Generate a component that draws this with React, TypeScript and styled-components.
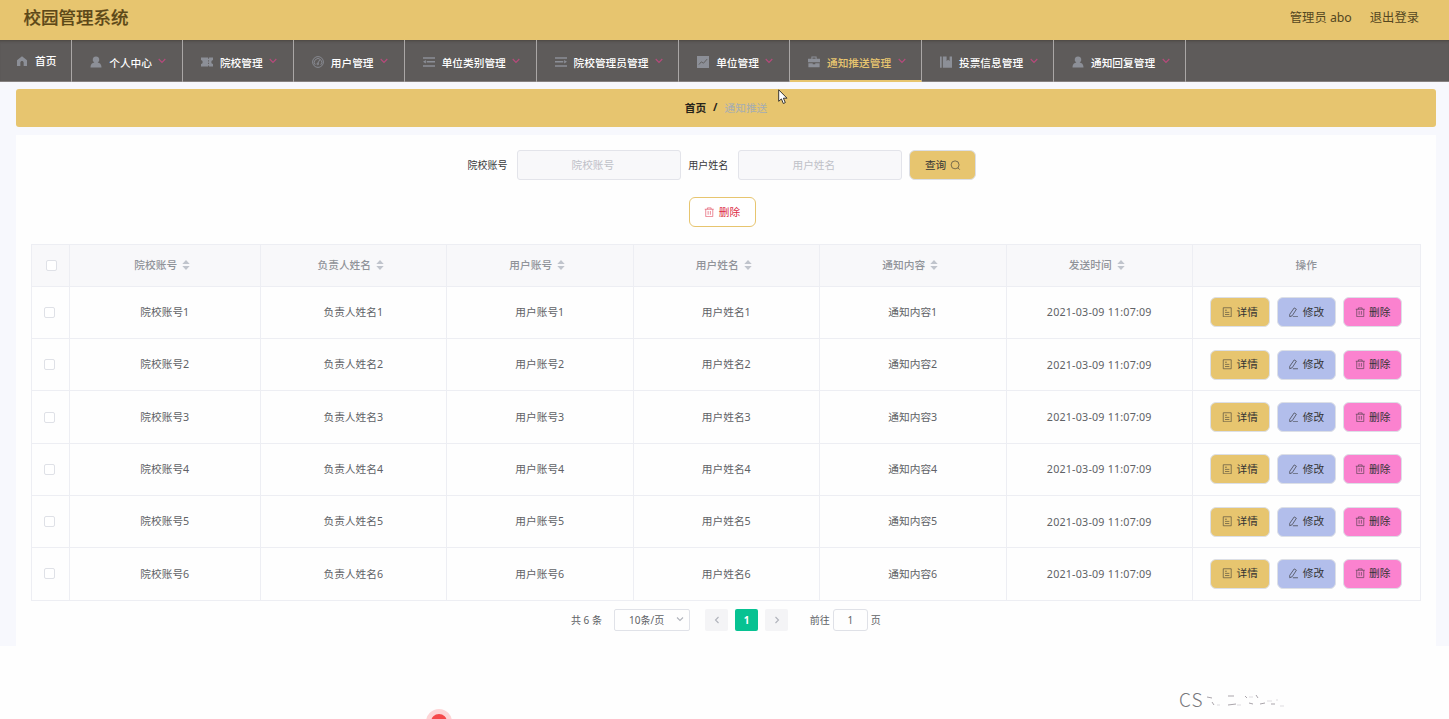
import React from 'react';
import styled, { createGlobalStyle } from 'styled-components';

const GlobalStyle = createGlobalStyle`
  * { box-sizing: border-box; }
  html, body { margin: 0; padding: 0; overflow: hidden; background: #fefefe; }
  body { font-family: "Noto Sans", "Noto Sans CJK SC", sans-serif; font-size: 10.7px; color: #606266; }
  button, input { font-family: inherit; }
`;

const Page = styled.div`
  position: relative;
  width: 1449px;
  height: 719px;
  overflow: hidden;
`;
const Header = styled.header`
  height: 40px;
  padding: 0 30px 4px 23.5px;
  display: flex;
  align-items: center;
  justify-content: space-between;
  background: #e7c56f;
`;
const Title = styled.h1`
  margin: 0;
  padding-bottom: 2px;
  font-size: 17.5px;
  line-height: 24px;
  font-weight: 500;
  color: #5c4818;
  -webkit-text-stroke: 0.2px #5c4818;
`;
const Account = styled.div`
  display: flex;
  gap: 18px;
  font-size: 12.3px;
  line-height: 20px;
  color: #54471f;
  white-space: pre;
`;
const Nav = styled.nav`
  height: 42px;
  display: flex;
  background: #5e5b5a;
  border-bottom: 1px solid #858180;
  box-shadow: inset 0 3px 3px -2px #4b4540;
`;
const NavItem = styled.a<{ $w: number; $active?: boolean; $home?: boolean }>`
  width: ${p => p.$w}px;
  height: 41.5px;
  flex: none;
  display: flex;
  align-items: center;
  padding-left: ${p => (p.$home ? 16 : 18)}px;
  padding-top: ${p => (p.$home ? 0 : p.$active ? 5 : 3)}px;
  border-right: 1px solid #aaa7a6;
  border-bottom: ${p => (p.$active ? '2px solid #e7c56f' : '0')};
  color: ${p => (p.$active ? '#e7c56f' : '#fff')};
  font-weight: 500;
  white-space: nowrap;
`;
const NavIcon = styled.svg`
  width: 12px;
  height: 12px;
  flex: none;
  margin-right: 7px;
  color: #8c8f97;
`;
const Caret = styled.svg`
  width: 8px;
  height: 6px;
  flex: none;
  margin-left: 6.5px;
  margin-bottom: 3px;
`;
const Body = styled.main`
  height: 564px;
  padding: 7px 13px 0 16px;
  background: #f7f8fd;
`;
const Breadcrumb = styled.div`
  height: 38px;
  padding-bottom: 2px;
  border-radius: 3px;
  background: #e7c56f;
  display: flex;
  justify-content: center;
  align-items: center;
  gap: 7px;
  color: #262319;
  font-weight: 700;
`;
const Crumb = styled.span`
  color: #a5adb3;
  font-weight: 400;
`;
const Panel = styled.section`
  height: 511px;
  margin-top: 8px;
  padding: 15px 15px 0;
  background: #fefefe;
`;
const Search = styled.div`
  display: flex;
  align-items: center;
  height: 30px;
  padding-left: 436.4px;
`;
const Label = styled.label`
  font-size: 10px;
  padding-bottom: 2px;
  color: #37383b;
  width: 49.2px;
`;
const Field = styled.input`
  width: 164.6px;
  height: 30px;
  margin-right: 7.2px;
  padding: 0 24px 0 12px;
  border: 1px solid #e3e4ea;
  border-radius: 3px;
  background: #f8f8fa;
  text-align: center;
  font-size: 10.7px;
  &::placeholder { color: #bfc1c8; }
`;
const Button = styled.button<{ $bg: string; $border?: string; $fg?: string; $w: number }>`
  width: ${p => p.$w}px;
  height: 30px;
  padding: 0 0 2px;
  flex: none;
  display: flex;
  align-items: center;
  justify-content: center;
  gap: 4px;
  border-radius: 6px;
  border: 1px solid ${p => p.$border || '#dcdfe6'};
  background: ${p => p.$bg};
  color: ${p => p.$fg || '#333'};
  font-size: 10.7px;
`;
const ButtonIcon = styled.svg`
  width: 10.5px;
  height: 10.5px;
  flex: none;
  margin-top: 1.5px;
  opacity: 0.8;
`;
const BulkActions = styled.div`
  display: flex;
  padding: 17px 0 17px 657.5px;
`;
const Table = styled.div`
  width: 1389.5px;
  border: 1px solid #edeef3;
  border-bottom: 0;
`;
const Row = styled.div<{ $head?: boolean }>`
  display: grid;
  grid-template-columns: 38px 190.5px 186.5px 186.5px 186.5px 186.5px 186.5px 1fr;
  height: ${p => (p.$head ? 41.8 : 52.3)}px;
  background: ${p => (p.$head ? '#f8f8fa' : '#fefefe')};
  color: ${p => (p.$head ? '#909399' : '#606266')};
  font-weight: ${p => (p.$head ? 500 : 400)};
`;
const Cell = styled.div<{ $kind?: 'text' | 'sortable' }>`
  display: flex;
  align-items: center;
  justify-content: center;
  gap: ${p => (p.$kind === 'sortable' ? 5 : 7)}px;
  padding: ${p => (p.$kind === 'sortable' ? '0 5px 2px 0' : p.$kind === 'text' ? '0 0 1.6px' : '0')};
  border-right: 1px solid #edeef3;
  border-bottom: 1px solid #edeef3;
  white-space: nowrap;
  &:last-child { border-right: 0; }
`;
const DateText = styled.span`
  letter-spacing: 0.2px;
`;
const Checkbox = styled.span<{ $head?: boolean }>`
  width: 11px;
  height: 11px;
  margin-left: ${p => (p.$head ? 1.5 : -2)}px;
  border: 1px solid #dfe1e7;
  border-radius: 2px;
  background: #fff;
`;
const Sort = styled.svg`
  width: 8px;
  height: 10px;
  margin-top: 1px;
`;
const Pager = styled.div`
  display: flex;
  align-items: center;
  height: 22px;
  margin-top: 8.4px;
  padding-left: 540px;
  font-size: 10px;
`;
const Total = styled.span`
  width: 43px;
  padding-bottom: 1px;
  white-space: nowrap;
`;
const PageSize = styled.div`
  width: 76px;
  height: 22px;
  margin-right: 15px;
  padding: 0 5px 1px 14px;
  display: flex;
  align-items: center;
  justify-content: space-between;
  border: 1px solid #e0e2e8;
  border-radius: 2px;
`;
const PageButton = styled.span<{ $active?: boolean }>`
  width: 23px;
  height: 22px;
  margin-right: 7.2px;
  display: flex;
  align-items: center;
  justify-content: center;
  border-radius: 2px;
  background: ${p => (p.$active ? '#07c292' : '#f4f4f6')};
  color: ${p => (p.$active ? '#fff' : '#b8bbc2')};
  font-weight: 700;
`;
const Jump = styled.div`
  display: flex;
  align-items: center;
  gap: 3px;
  margin-left: 14.3px;
  white-space: nowrap;
`;
const JumpBox = styled.span`
  width: 35px;
  height: 22px;
  display: flex;
  align-items: center;
  justify-content: center;
  border: 1px solid #dfe1e7;
  border-radius: 3px;
`;
const Cursor = styled.svg`
  position: absolute;
  left: 778px;
  top: 89px;
  width: 10px;
  height: 16px;
`;
const RecordDot = styled.div`
  position: absolute;
  left: 426px;
  top: 709px;
  width: 26px;
  height: 26px;
  border-radius: 50%;
  border: 5.5px solid #fdd5d6;
  background: #f5494a;
`;
const Watermark = styled.div`
  position: absolute;
  left: 1179px;
  top: 687px;
  height: 24px;
  display: flex;
  font: 300 19px/24px "Noto Sans CJK SC", sans-serif;
  letter-spacing: 1px;
  color: #77777b;
`;

type IconName = 'home' | 'user' | 'ticket' | 'gauge' | 'unfold' | 'fold' | 'chart' | 'case' | 'book';
const iconArt: Record<IconName, React.ReactNode> = {
  home: <path fill="currentColor" d="M8 1.7 1.3 7v7.5h4.5V10c0-2.8 4.4-2.8 4.4 0v4.5h4.5V7z" />,
  user: <path fill="currentColor" d="M8 .6a4.2 4.2 0 0 1 2.2 7.9c2.8.5 5.1 2.4 5.1 5.8v1H.7v-1c0-3.4 2.3-5.3 5.1-5.8A4.2 4.2 0 0 1 8 .6z" />,
  ticket: <path fill="currentColor" d="M0 2h9.5v1.5h1.2V2H16v3.2a2.8 2.8 0 0 0 0 5.5V14h-5.3v-1.5H9.5V14H0v-3.3a2.8 2.8 0 0 0 0-5.5zm9.5 3.5v1.7h1.2V5.5zm0 3.6v1.7h1.2V9.1z" />,
  gauge: (
    <g fill="none" stroke="currentColor" strokeWidth="1.2">
      <circle cx="8" cy="8" r="7.2" />
      <path d="M4.3 11.8A5 5 0 1 1 11.7 11.8M10.2 5.2 7.7 10" />
      <circle cx="7.7" cy="10.6" r="1.1" />
    </g>
  ),
  unfold: <path fill="currentColor" d="M0 1.5h16v2H0zm5 5h11v2.3H5zM0 12.2h16v2H0zM0 7.6l3.8-2.3v4.7z" />,
  fold: <path fill="currentColor" d="M0 1.5h16v2H0zm0 5h11v2.3H0zM0 12.2h16v2H0zM16 7.6l-3.8-2.3v4.7z" />,
  chart: (
    <>
      <path fill="currentColor" d="M0 0h16v16H0z" />
      <path fill="none" stroke="#5e5b5a" strokeWidth="1.2" d="m2.5 11.5 3.2-3.7 3 1.8 4.8-5.5" />
    </>
  ),
  case: <path fill="currentColor" fillRule="evenodd" d="M4.5 3.5V.8h7v2.7H16v4.7H0V3.5zm1.4 0h4.2V2.1H5.9zM.5 9.5h5.8v1.4h3.4V9.5h5.8V15H.5z" />,
  book: <path fill="currentColor" d="M0 .5h2.3v15H0zm3.8 0h5v6l2-1.4 2 1.4v-6H16v15H3.8z" />,
};

const menu: { label: string; icon: IconName; w: number; active?: boolean }[] = [
  { label: '首页', icon: 'home', w: 72.2 },
  { label: '个人中心', icon: 'user', w: 110.7 },
  { label: '院校管理', icon: 'ticket', w: 110.9 },
  { label: '用户管理', icon: 'gauge', w: 110.9 },
  { label: '单位类别管理', icon: 'unfold', w: 131.9 },
  { label: '院校管理员管理', icon: 'fold', w: 142.6 },
  { label: '单位管理', icon: 'chart', w: 110.8 },
  { label: '通知推送管理', icon: 'case', w: 132, active: true },
  { label: '投票信息管理', icon: 'book', w: 132 },
  { label: '通知回复管理', icon: 'user', w: 132 },
];

const columns = ['院校账号', '负责人姓名', '用户账号', '用户姓名', '通知内容'];

const TrashIcon = () => (
  <ButtonIcon viewBox="0 0 14 14" fill="none" stroke="currentColor" strokeWidth="0.9">
    <path d="M1 3h12M4.5 3V1.2h5V3M2.3 3v9.8h9.4V3M5.5 5.3v5M8.5 5.3v5" />
  </ButtonIcon>
);
const DocIcon = () => (
  <ButtonIcon viewBox="0 0 14 14" fill="none" stroke="currentColor" strokeWidth="0.9">
    <path d="M1.7 1h10.6v12H1.7zM4 4.3h2.5M4 7.2h5.8M4 10h5.8" />
  </ButtonIcon>
);
const EditIcon = () => (
  <ButtonIcon viewBox="0 0 14 14" fill="none" stroke="currentColor" strokeWidth="1.1">
    <path d="M8.3 1.2 11.2 3 5.6 11.6 2.3 13V9.8zM6.5 13h6.8" />
  </ButtonIcon>
);
const Chevron = ({ d }: { d: string }) => (
  <svg width="8" height="8" viewBox="0 0 8 8" fill="none" stroke="#b0b3bb" strokeWidth="1.1">
    <path d={d} />
  </svg>
);

export default function App() {
  return (
    <Page>
      <GlobalStyle />
      <Header>
        <Title>校园管理系统</Title>
        <Account>
          <span>管理员 abo</span>
          <span>退出登录</span>
        </Account>
      </Header>
      <Nav>
        {menu.map((m, i) => (
          <NavItem key={m.label} $w={m.w} $active={m.active} $home={i === 0}>
            <NavIcon viewBox="0 0 16 16">{iconArt[m.icon]}</NavIcon>
            {m.label}
            {i > 0 && (
              <Caret viewBox="0 0 8 6" fill="none" stroke="#b84a7c" strokeWidth="1.1">
                <path d="m.7 1 3.3 3.4L7.3 1" />
              </Caret>
            )}
          </NavItem>
        ))}
      </Nav>
      <Body>
        <Breadcrumb>
          <span>首页</span>
          <span>/</span>
          <Crumb>通知推送</Crumb>
        </Breadcrumb>
        <Panel>
          <Search>
            <Label>院校账号</Label>
            <Field placeholder="院校账号" />
            <Label>用户姓名</Label>
            <Field placeholder="用户姓名" />
            <Button $w={67} $bg="#e7c56f">
              查询
              <ButtonIcon viewBox="0 0 14 14" fill="none" stroke="currentColor">
                <circle cx="6.8" cy="6.5" r="5.3" />
                <path d="m10.5 10.4 2.5 2.5" />
              </ButtonIcon>
            </Button>
          </Search>
          <BulkActions>
            <Button $w={67.4} $bg="#fff" $border="#e7c56f" $fg="#dc2b45">
              <TrashIcon />
              删除
            </Button>
          </BulkActions>
          <Table>
            <Row $head>
              <Cell><Checkbox $head /></Cell>
              {[...columns, '发送时间'].map(c => (
                <Cell key={c} $kind="sortable">
                  {c}
                  <Sort viewBox="0 0 8 10" fill="#c0c4cc">
                    <path d="M4 0 7.7 4H.3zM4 10 .3 6h7.4z" />
                  </Sort>
                </Cell>
              ))}
              <Cell $kind="text">操作</Cell>
            </Row>
            {[1, 2, 3, 4, 5, 6].map(n => (
              <Row key={n}>
                <Cell><Checkbox /></Cell>
                {columns.map(c => <Cell key={c} $kind="text">{c + n}</Cell>)}
                <Cell><DateText>2021-03-09 11:07:09</DateText></Cell>
                <Cell>
                  <Button $w={59.3} $bg="#e7c56f"><DocIcon />详情</Button>
                  <Button $w={59.3} $bg="#b2beeb"><EditIcon />修改</Button>
                  <Button $w={59.3} $bg="#fb82cf"><TrashIcon />删除</Button>
                </Cell>
              </Row>
            ))}
          </Table>
          <Pager>
            <Total>共 6 条</Total>
            <PageSize>
              10条/页
              <Chevron d="m1 2.5 3 3 3-3" />
            </PageSize>
            <PageButton><Chevron d="M5.5 1 2.5 4l3 3" /></PageButton>
            <PageButton $active>1</PageButton>
            <PageButton><Chevron d="m2.5 1 3 3-3 3" /></PageButton>
            <Jump>
              前往
              <JumpBox>1</JumpBox>
              页
            </Jump>
          </Pager>
        </Panel>
      </Body>
      <Cursor viewBox="0 0 10 16">
        <path d="M.7.8v11.5l2.7-2.4 1.9 4.6 2-.9-1.9-4.4H9z" fill="#fff" stroke="#222" strokeWidth="0.9" />
      </Cursor>
      <RecordDot />
      <Watermark>
        CS
        <svg width="90" height="24" fill="none" stroke="#aaa5ab" strokeWidth="1">
          <path d="m4 10 5 1m0 4 2 3M25 9h6m-6 9 8-1M42 9l2 2m2 5 4 1m3-9 2 3m2 6 5-1m6 1h4" />
          <path d="M14 18h3m17 0h4m8-8h4m14 4h5m5-2v2m3 5h4" stroke="#dedce0" />
        </svg>
      </Watermark>
    </Page>
  );
}
